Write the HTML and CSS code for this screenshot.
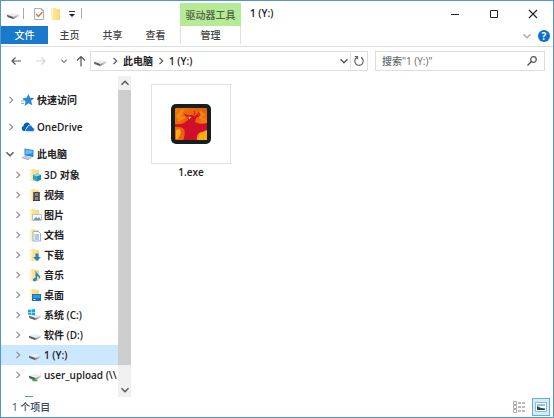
FILE: index.html
```html
<!DOCTYPE html>
<html lang="zh-CN">
<head>
<meta charset="utf-8">
<meta name="viewport" content="width=device-width, initial-scale=1">
<title>1 (Y:)</title>
<link rel="stylesheet" href="styles.css">
</head>
<body>
<svg class="defs" aria-hidden="true">
  <defs>
    <linearGradient id="metal" x1="0" y1="0" x2="1" y2="0"><stop offset="0" stop-color="#858585"/><stop offset=".5" stop-color="#b9bcbe"/><stop offset="1" stop-color="#dadcde"/></linearGradient>
    <linearGradient id="gold" x1="0" y1="0" x2="1" y2="0"><stop offset="0" stop-color="#ffe9a8"/><stop offset="1" stop-color="#f8d775"/></linearGradient>
    <symbol id="chev" viewBox="0 0 8 10"><path d="M2.500 1.800L5.700 5 2.500 8.200" fill="none" stroke="currentColor" stroke-width="1.2"/></symbol>
    <symbol id="down" viewBox="0 0 10 8"><path d="M1.500 2.300L5 5.800l3.500-3.500" fill="none" stroke="currentColor" stroke-width="1.400"/></symbol>
    <symbol id="drive" viewBox="0 0 14 14"><path d="M1 7.500L6.500 6 13 7.300 7.500 10z" fill="#eceeef"/><path d="M1 7.800L7.500 10v2.300L2 10.200Q1 9.600 1 8.800z" fill="#5c5e60"/><path d="M7.500 10L13 7.300v2L7.500 12.300z" fill="url(#metal)"/></symbol>
    <symbol id="folder" viewBox="0 0 14 14"><path d="M2 1h4.500l1 1H11v11H2z" fill="url(#gold)"/><path d="M2 1h2v12H2z" fill="#fff0bd"/></symbol>
  </defs>
</svg>
<div class="window">
  <header class="titlebar">
    <div class="quick">
      <svg class="i14"><use href="#drive"/></svg>
      <span class="sep"></span>
      <button class="plain" aria-label="属性"><svg class="i14" viewBox="0 0 14 14"><path d="M2.500 1.500h7l2 2v9h-9z" fill="#fafcff" stroke="#a4b0bb"/><path d="M9.500 1.500v2h2" fill="none" stroke="#a4b0bb"/><path d="M4.200 7l2.200 2.500L10.500 5" fill="none" stroke="#df7440" stroke-width="1.500"/></svg></button>
      <button class="plain" aria-label="新建文件夹"><svg class="i14"><use href="#folder"/></svg></button>
      <button class="plain more" aria-label="自定义"><svg viewBox="0 0 6 6"><path d="M0 .5h6" stroke="#333"/><path d="M0 3h6L3 6z" fill="#222"/></svg></button>
      <span class="sep"></span>
    </div>
    <div class="context">驱动器工具</div>
    <h1 class="title">1 (Y:)</h1>
    <div class="controls">
      <button class="plain" aria-label="最小化"><svg viewBox="0 0 10 10"><path d="M1 5.500h8" stroke="#222"/></svg></button>
      <button class="plain" aria-label="最大化"><svg viewBox="0 0 10 10"><path d="M1.500 1.500h7v7h-7z" fill="none" stroke="#222"/></svg></button>
      <button class="plain" aria-label="关闭"><svg viewBox="0 0 10 10"><path d="M1 1l8 8M9 1L1 9" stroke="#222" stroke-width="1.100"/></svg></button>
    </div>
  </header>
  <nav class="ribbon">
    <button class="tab file">文件</button>
    <button class="tab">主页</button>
    <button class="tab">共享</button>
    <button class="tab">查看</button>
    <button class="tab manage">管理</button>
    <div class="ribbon-end">
      <button class="plain" aria-label="展开功能区"><svg class="arrow pale" viewBox="0 0 10 8"><use href="#down"/></svg></button>
      <button class="help" aria-label="帮助">?</button>
    </div>
  </nav>
  <div class="toolbar">
    <div class="history">
      <button class="plain" aria-label="后退"><svg viewBox="0 0 12 12"><path d="M11 6H2M5.500 2.500L2 6l3.500 3.500" fill="none" stroke="#555" stroke-width="1.200"/></svg></button>
      <button class="plain" aria-label="前进"><svg viewBox="0 0 12 12"><path d="M1 6h9M6.500 2.500L10 6l-3.500 3.500" fill="none" stroke="#d4d4d4" stroke-width="1.200"/></svg></button>
      <button class="plain recent" aria-label="最近"><svg viewBox="0 0 10 8"><use href="#down"/></svg></button>
      <button class="plain" aria-label="上移"><svg viewBox="0 0 12 12"><path d="M6 11.500V1.500M2 5.500l4-4 4 4" fill="none" stroke="#555" stroke-width="1.200"/></svg></button>
    </div>
    <div class="address">
      <svg class="i14"><use href="#drive"/></svg>
      <svg class="chev dark"><use href="#chev"/></svg>
      <a href="#pc">此电脑</a>
      <svg class="chev dark"><use href="#chev"/></svg>
      <a href="#y">1 (Y:)</a>
      <button class="plain drop" aria-label="地址列表"><svg class="arrow" viewBox="0 0 10 8"><use href="#down"/></svg></button>
      <button class="plain refresh" aria-label="刷新"><svg class="i12" viewBox="0 0 12 12"><path d="M4 2.400A4.200 4.200 0 1 0 8 2.400M1.800 1.500h2.700v2.700" fill="none" stroke="#666" stroke-width="1.200"/></svg></button>
    </div>
    <label class="search">
      <input type="text" placeholder='搜索"1 (Y:)"' aria-label="搜索">
      <svg class="i12" viewBox="0 0 12 12"><circle cx="7.500" cy="4.500" r="2.800" fill="none" stroke="#555" stroke-width="1.200"/><path d="M5.400 6.600L1.500 10.500" stroke="#555" stroke-width="1.400"/></svg>
    </label>
  </div>
  <main class="body">
    <aside class="side">
      <ul class="tree">
        <li class="row root"><svg class="chev"><use href="#chev"/></svg><svg class="i14" viewBox="0 0 14 14"><path d="M7.500 1l1.600 3.700 4.200.2-3.200 2.800 1.200 4.500-3.800-2L3.600 13l1-4.600L1 5.500l4.600-.7z" fill="#2688d8"/><path d="M0 8h3M0 10.500h3" stroke="#79b9eb"/></svg><span>快速访问</span></li>
        <li class="row root"><svg class="chev"><use href="#chev"/></svg><svg class="i14" viewBox="0 0 14 14"><path d="M1 9.500Q0 7 2.500 6 3 2.500 6 2.500 8.500 2.500 9 4.500L5 8v3H3Q1.500 11 1 9.500z" fill="#0a5fb8"/><path d="M5 11.500Q3.500 9 6 8 6.500 5 9 5 11.500 5 11.700 7.500 14 8 13.500 10 13 11.500 11.500 11.500z" fill="#1272cc" stroke="#fff" stroke-width=".6"/></svg><span>OneDrive</span></li>
        <li class="row root open"><svg class="arrow"><use href="#down"/></svg><svg class="i14" viewBox="0 0 14 14"><path d="M3.500 1.500l9 1.500v7l-9-1.600z" fill="#2788d5"/><path d="M4.500 2.600l7 1.200v2.500L4.500 7.500z" fill="#6abdf0"/><path d="M1 10l4-1.300 7 2-4 1.800z" fill="#c2cbd2"/><path d="M1 10l7 2.500v.8L1 11z" fill="#8e9ba6"/></svg><span>此电脑</span></li>
        <li class="row"><svg class="chev"><use href="#chev"/></svg><svg class="i14" viewBox="0 0 14 14"><use href="#folder"/><path d="M5 7l4-1.500L13 7v4.500L9 13.500 5 11.500z" fill="#24a7c5"/><path d="M5 7l4 1.500L13 7 9 5.500z" fill="#86def0"/><path d="M9 8.500v5l4-2V7z" fill="#168eae"/></svg><span>3D 对象</span></li>
        <li class="row"><svg class="chev"><use href="#chev"/></svg><svg class="i14" viewBox="0 0 14 14"><use href="#folder"/><path d="M5 4h7v9H5z" fill="#3e3e40"/><path d="M7 5h3v3H7zM7 9h3v3H7z" fill="#8b8589"/><path d="M5.800 4.500v8M11.200 4.500v8" stroke="#ddd" stroke-width=".8" stroke-dasharray="1 1"/></svg><span>视频</span></li>
        <li class="row"><svg class="chev"><use href="#chev"/></svg><svg class="i14" viewBox="0 0 14 14"><use href="#folder"/><path d="M4.500 6.500h9v6h-9z" fill="#f4f8fc" stroke="#a8bac9" stroke-width=".8"/><path d="M5 12l3-3 1.500 1.500L11 9l2 3z" fill="#7993ac"/></svg><span>图片</span></li>
        <li class="row"><svg class="chev"><use href="#chev"/></svg><svg class="i14" viewBox="0 0 14 14"><use href="#folder"/><path d="M5 3.500h5.500l2 2V13H5z" fill="#f7fbff" stroke="#8babc5" stroke-width=".9"/><path d="M6.500 7h4.500M6.500 9h4.500M6.500 11h4.500" stroke="#6b9cc5"/></svg><span>文档</span></li>
        <li class="row"><svg class="chev"><use href="#chev"/></svg><svg class="i14" viewBox="0 0 14 14"><use href="#folder"/><path d="M7.500 5.500h3V9H13l-4 4-4-4h2.500z" fill="#2582c9"/></svg><span>下载</span></li>
        <li class="row"><svg class="chev"><use href="#chev"/></svg><svg class="i14" viewBox="0 0 14 14"><use href="#folder"/><path d="M8 3q.5 2.500 3 4 2 1.700.5 4.500.3-2.500-2.500-3.500v3Q8.500 13.500 6.500 13.500 4.500 13 5 11.300 6 9.800 7.500 10V3z" fill="#1688d7"/></svg><span>音乐</span></li>
        <li class="row"><svg class="chev"><use href="#chev"/></svg><svg class="i14" viewBox="0 0 14 14"><use href="#folder"/><path d="M4 6h9v7H4z" fill="#1673bb"/><path d="M5 7h7v3H5z" fill="#2d9be2"/><path d="M5.500 11.500h2" stroke="#fff"/></svg><span>桌面</span></li>
        <li class="row"><svg class="chev"><use href="#chev"/></svg><svg class="i14" viewBox="0 0 14 14"><use href="#drive"/><path d="M0 2l3-.5V4H0zM3.500 1.400L7 1v3H3.500zM0 4.500h3V7l-3-.4zM3.500 4.500H7v3l-3.500-.4z" fill="#15a8df"/></svg><span>系统 (C:)</span></li>
        <li class="row"><svg class="chev"><use href="#chev"/></svg><svg class="i14"><use href="#drive"/></svg><span>软件 (D:)</span></li>
        <li class="row selected"><svg class="chev"><use href="#chev"/></svg><svg class="i14"><use href="#drive"/></svg><span>1 (Y:)</span></li>
        <li class="row"><svg class="chev"><use href="#chev"/></svg><svg class="i14" viewBox="0 0 14 14"><use href="#drive"/><path d="M1 8l5 2 .5 2.500L2 10.500z" fill="#287b38"/><path d="M4.500 12.500h5M7 11v2" stroke="#44a353" stroke-width="1.500"/></svg><span>user_upload (\\</span></li>
        <li class="row root network" aria-label="网络"><svg class="chev"><use href="#chev"/></svg><svg class="i14" viewBox="0 0 14 14"><path d="M4 1h8v7H4z" fill="#4b9cc8"/><circle cx="4" cy="8" r="3" fill="#327aa8"/></svg></li>
      </ul>
      <div class="scroll">
        <button class="plain" aria-label="向上滚动"><svg class="arrow up"><use href="#down"/></svg></button>
        <div class="thumb"></div>
        <button class="plain" aria-label="向下滚动"><svg class="arrow"><use href="#down"/></svg></button>
      </div>
    </aside>
    <section class="files">
      <figure class="item">
        <div class="preview">
          <svg viewBox="0 0 40 40">
            <defs><linearGradient id="fire" x1="0" y1="0" x2="1" y2="1"><stop offset="0" stop-color="#ef780d"/><stop offset=".5" stop-color="#e95c08"/><stop offset="1" stop-color="#ffb312"/></linearGradient></defs>
            <rect width="40" height="40" rx="5" fill="#14201f"/>
            <rect x="4" y="4" width="32" height="32" rx="1" fill="url(#fire)"/>
            <path d="M5 12l5-6 4-1-4 7 5 1-7 5zM29 6l6 5-4 1 3 5-6-3z" fill="#f89a1b" opacity=".6"/>
            <path d="M4 20q5 1 9-1l4-3q-1-2 0-3-3 0-4-4 3 3 7 2 2 0 3 1 4-1 4-4 2 4-2 6l-1 4q4 3 12 1v9q-5-1-8 1-3 3-2 7H12q3-7 1-11-3-3-9-2z" fill="#cf0f2b"/>
            <path d="M17.500 12.500l.5 3 2.500-2.500z" fill="#ffd26b"/>
            <path d="M27 8q4 3 0 5M23 7q2 2 0 4" fill="none" stroke="#cb1b18"/>
            <path d="M5 26l4-1 1 4-3 6H5zM29 29l7-3v10h-9z" fill="#fcaa14"/>
          </svg>
        </div>
        <figcaption>1.exe</figcaption>
      </figure>
    </section>
  </main>
  <footer class="status">
    <span>1 个项目</span>
    <div class="views">
      <button class="plain" aria-label="详细信息"><svg class="i14" viewBox="0 0 14 14"><path d="M1.500 1.500h3v3h-3zM1.500 5.500h3v3h-3zM1.500 9.500h3v3h-3z" fill="#fff" stroke="#999" stroke-width=".8"/><path d="M6 3h7M6 7h7M6 11h7" stroke="#777" stroke-dasharray="3 1"/></svg></button>
      <button class="plain active" aria-label="大图标"><svg class="i14" viewBox="0 0 14 14"><path d="M1.500 2.500h11v9h-11z" fill="#fff" stroke="#a7b5bf"/><path d="M3 4h8v2H3z" fill="#8bc4ef"/><path d="M3 6l4 2 4 .5V10H3z" fill="#1c4965"/></svg></button>
    </div>
  </footer>
</div>
</body>
</html>
```
FILE: styles.css
```css
* { box-sizing: border-box; }
body { margin: 0; font: 500 10px/16px "Open Sans", "Noto Sans CJK SC", sans-serif; color: #222; }
svg { display: block; flex: none; }
button { font: inherit; color: inherit; border: 0; padding: 0; }
.defs { position: absolute; width: 0; height: 0; }
.window { height: 100vh; display: flex; flex-direction: column; border: 1px solid #5595cd; background: #fff; }
.plain { display: flex; align-items: center; justify-content: center; background: none; }
.i14 { width: 14px; height: 14px; }
.i12 { width: 12px; height: 12px; }
.chev { width: 8px; height: 10px; color: #929292; }
.chev.dark { color: #555; }
.arrow { width: 10px; height: 8px; color: #555; }
.arrow.pale { color: #aaa; }
.arrow.up { transform: rotate(180deg); }

.titlebar { flex: none; display: flex; height: 25px; }
.quick { display: flex; align-items: center; width: 179px; padding-left: 5px; gap: 3px; }
.sep { width: 1px; height: 11px; background: #aaa; }
.sep + .plain { margin-left: 5px; }
.more { width: 12px; }
.more svg { width: 6px; height: 6px; }
.context { width: 61px; margin-top: 2px; background: #b7ea96; color: #4d6144; text-align: center; line-height: 24px; }
.title { margin: 0; padding-left: 9px; font-size: 10px; font-weight: 600; line-height: 25px; }
.controls { display: flex; margin-left: auto; padding-right: 1px; }
.controls .plain { width: 39px; }
.controls svg { width: 10px; height: 10px; }

.ribbon { flex: none; display: flex; height: 21px; border-bottom: 1px solid #dcdcdc; }
.tab { width: 43px; height: 18px; background: none; color: #444; }
.tab.file { width: 47px; background: #1979ca; color: #fff; }
.tab.manage { width: 61px; margin-left: 3px; border: solid #e0e0e0; border-width: 0 1px; }
.ribbon-end { display: flex; align-items: center; margin-left: auto; padding-right: 3px; gap: 6px; }
.help { width: 12px; height: 12px; border-radius: 50%; background: #0b72cc; color: #fff; font-weight: 700; line-height: 12px; }

.toolbar { flex: none; display: flex; padding: 4px 8px 5px 9px; }
.history { display: flex; align-items: center; width: 80px; gap: 13px; }
.history svg { width: 12px; height: 12px; }
.history .recent { width: 8px; margin-right: -6px; color: #777; }
.history .recent svg { width: 8px; height: 8px; }
.address { flex: 1; display: flex; align-items: center; height: 20px; padding-left: 2px; gap: 4px; border: 1px solid #ddd; font-weight: 600; }
.address a { color: #222; text-decoration: none; }
.drop { margin-left: auto; }
.refresh { width: 17px; height: 18px; margin-left: -3px; border-left: 1px solid #e4e4e4; }
.search { display: flex; align-items: center; width: 170px; height: 20px; margin-left: 7px; padding: 0 6px; border: 1px solid #ddd; }
.search input { flex: 1; min-width: 0; border: 0; padding: 0; font: inherit; background: none; outline: 0; }
.search input::placeholder { color: #666; opacity: 1; }

.body { flex: 1; min-height: 0; display: flex; }
.side { display: flex; width: 130px; }
.tree { flex: 1; min-width: 0; margin: 0; padding: 14px 0 0; list-style: none; overflow: hidden; font-weight: 600; }
.row { display: flex; align-items: center; height: 20px; padding-left: 13px; white-space: nowrap; }
.row .i14 { margin: 0 2px 0 6px; }
.row.root { padding-left: 6px; margin-bottom: 7px; }
.row.root.open { padding-left: 4px; margin-bottom: 1px; }
.row.root.network { margin-top: 7px; }
.row.selected { background: #cce8ff; }
.scroll { display: flex; flex-direction: column; width: 13px; background: #f0f0f0; }
.scroll .plain { height: 14px; }
.thumb { flex: 1; margin-bottom: 18px; background: #cdcdcd; }
.files { flex: 1; padding: 8px 20px; }
.item { width: 80px; margin: 0; text-align: center; font-weight: 600; }
.preview { display: flex; align-items: center; justify-content: center; height: 80px; border: 1px solid #e2e2e2; }
.preview svg { width: 40px; height: 40px; }
.status { flex: none; display: flex; align-items: center; justify-content: space-between; height: 20px; padding: 0 3px 0 11px; color: #344565; }
.views { display: flex; gap: 4px; }
.views .plain { width: 18px; height: 18px; }
.views .active { border: 1px solid #64addd; background: #d2edfa; }
```
